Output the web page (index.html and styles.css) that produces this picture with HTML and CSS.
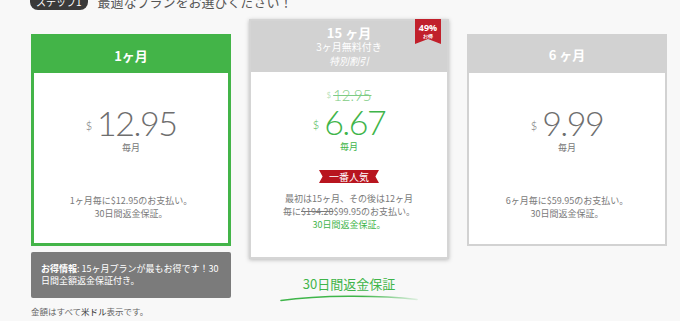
FILE: index.html
```html
<!DOCTYPE html>
<html lang="ja">
<head>
    <meta charset="UTF-8">
    <meta name="viewport" content="width=device-width, initial-scale=1.0">
    <title>プラン選択</title>
    <link rel="stylesheet" href="styles.css">
</head>
<body>
    <div class="step-title">
        <span class="step-badge">ステップ1</span>
        <span class="step-text">最適なプランをお選びください！</span>
    </div>

    <div class="plans">
        <div class="col">
            <div class="plan selected">
                <div class="plan-head">1ヶ月</div>
                <div class="plan-body">
                    <div class="price"><span class="cur">$</span>12.95</div>
                    <div class="per">毎月</div>
                    <p class="desc">1ヶ月毎に$12.95のお支払い。<br>30日間返金保証。</p>
                </div>
            </div>
            <div class="info-box">
                <b>お得情報</b>: 15ヶ月プランが最もお得です！30日間全額返金保証付き。
            </div>
            <p class="note">金額はすべて<b>米ドル</b>表示です。</p>
        </div>

        <div class="col">
            <div class="plan featured">
                <div class="plan-head">
                    <div class="head-title">15 ヶ月</div>
                    <div class="head-sub">3ヶ月無料付き</div>
                    <div class="head-sub italic">特別割引</div>
                </div>
                <div class="ribbon">49%<small>お得</small></div>
                <div class="plan-body">
                    <div class="old-price"><span class="cur">$</span><s>12.95</s></div>
                    <div class="price green"><span class="cur">$</span>6.67</div>
                    <div class="per green">毎月</div>
                    <div class="popular">一番人気</div>
                    <p class="desc">最初は15ヶ月、その後は12ヶ月<br>毎に<s>$194.20</s>$99.95のお支払い。<br><span class="green">30日間返金保証。</span></p>
                </div>
            </div>
            <div class="guarantee">
                <span>30日間返金保証</span>
                <svg width="140" height="8" viewBox="0 0 140 8">
                    <defs>
                        <linearGradient id="swoosh" x1="0" x2="1" y1="0" y2="0">
                            <stop offset="0" stop-color="#3fb54a"/>
                            <stop offset="0.6" stop-color="#3fb54a"/>
                            <stop offset="1" stop-color="#3fb54a" stop-opacity="0.15"/>
                        </linearGradient>
                    </defs>
                    <path d="M2 6.5 C 40 1, 100 1, 138 5.5" fill="none" stroke="url(#swoosh)" stroke-width="1.6" stroke-linecap="round"/>
                </svg>
            </div>
        </div>

        <div class="col">
            <div class="plan">
                <div class="plan-head">6 ヶ月</div>
                <div class="plan-body">
                    <div class="price"><span class="cur">$</span>9.99</div>
                    <div class="per">毎月</div>
                    <p class="desc">6ヶ月毎に$59.95のお支払い。<br>30日間返金保証。</p>
                </div>
            </div>
        </div>
    </div>
</body>
</html>
```

FILE: styles.css
```css
body {
    font-family: "Noto Sans CJK JP", "Noto Sans", sans-serif;
    background-color: #f8f8f8;
    margin: 0;
    color: #666;
    overflow: hidden;
}

.step-title {
    margin-top: -9px;
    padding-left: 30px;
    display: flex;
    align-items: center;
    gap: 10px;
    height: 20px;
}

.step-badge {
    background: #3a3a3a;
    color: white;
    font-size: 10px;
    padding: 1px 6px;
    border-radius: 8px;
}

.step-text {
    font-size: 13px;
    color: #555;
}

.plans {
    display: flex;
    gap: 18px;
    padding-left: 31px;
    margin-top: 8px;
    align-items: flex-start;
}

.col {
    width: 200px;
}

.plan {
    margin-top: 15px;
    height: 212px;
    border: 2px solid #d2d2d2;
    background: white;
    box-sizing: border-box;
    display: flex;
    flex-direction: column;
}

.plan-head {
    background: #d2d2d2;
    color: white;
    font-weight: bold;
    font-size: 13px;
    height: 37px;
    display: flex;
    align-items: center;
    justify-content: center;
    flex-shrink: 0;
}

.selected {
    border: 3px solid #43b448;
}

.selected .plan-head {
    background: #43b448;
    height: 36px;
}

.plan-body {
    text-align: center;
    padding-top: 33px;
}

.price {
    font-family: Lato, "Open Sans", sans-serif;
    font-weight: 300;
    font-size: 34px;
    line-height: 34px;
    color: #6e6e6e;
    letter-spacing: -1.5px;
}

.cur {
    font-size: 11px;
    vertical-align: top;
    position: relative;
    top: 3px;
    margin-right: 5px;
    letter-spacing: 0;
}

.per {
    font-size: 9px;
    line-height: 13px;
    margin-top: 1px;
    color: #777;
}

.desc {
    font-size: 9px;
    line-height: 13px;
    color: #7a7a7a;
    margin: 40px 0 0;
}

.green {
    color: #3fb54a;
}

.featured {
    position: relative;
    margin-top: 0;
    height: 240px;
    border-color: #d5d5d5;
    box-shadow: 0 1px 4px rgba(0, 0, 0, 0.25);
}

.featured .plan-head {
    height: 51px;
    flex-direction: column;
    font-weight: normal;
}

.head-title {
    font-weight: bold;
    font-size: 13px;
    line-height: 15px;
}

.head-sub {
    font-size: 10px;
    line-height: 14px;
}

.italic {
    font-style: italic;
}

.ribbon {
    position: absolute;
    top: -2px;
    right: 6px;
    width: 26px;
    height: 25px;
    background: #c1202b;
    color: white;
    font-family: "Open Sans", sans-serif;
    font-weight: bold;
    font-size: 9px;
    line-height: 11px;
    text-align: center;
    padding-top: 3px;
    box-sizing: border-box;
    clip-path: polygon(0 0, 100% 0, 100% 100%, 50% 80%, 0 100%);
    display: flex;
    flex-direction: column;
}

.ribbon small {
    font-size: 5px;
    line-height: 6px;
}

.featured .plan-body {
    padding-top: 15px;
}

.old-price {
    font-family: Lato, sans-serif;
    font-weight: 300;
    font-size: 15px;
    line-height: 16px;
    color: #7fcc85;
}

.old-price .cur {
    font-size: 8px;
    top: 0;
    margin-right: 2px;
}

.featured .price {
    margin-top: 2px;
}

.popular {
    width: fit-content;
    margin: 17px auto 0;
    background: #b8151f;
    color: white;
    font-size: 10px;
    line-height: 13px;
    padding: 0 10px;
    clip-path: polygon(0 0, 100% 0, 94% 50%, 100% 100%, 0 100%, 6% 50%);
}

.featured .desc {
    margin-top: 9px;
}

.info-box {
    margin-top: 6px;
    background: #7b7b7b;
    color: white;
    font-size: 9px;
    line-height: 12px;
    padding: 11px 10px;
    border-radius: 2px;
}

.note {
    font-size: 8.5px;
    line-height: 12px;
    color: #666;
    margin: 7px 0 0;
}

.note b {
    color: #333;
    font-weight: normal;
}

.guarantee {
    margin-top: 17px;
    display: flex;
    flex-direction: column;
    align-items: center;
    color: #3fb54a;
    font-size: 13px;
    line-height: 16px;
}

.guarantee svg {
    display: block;
    margin-top: 2px;
}
```
